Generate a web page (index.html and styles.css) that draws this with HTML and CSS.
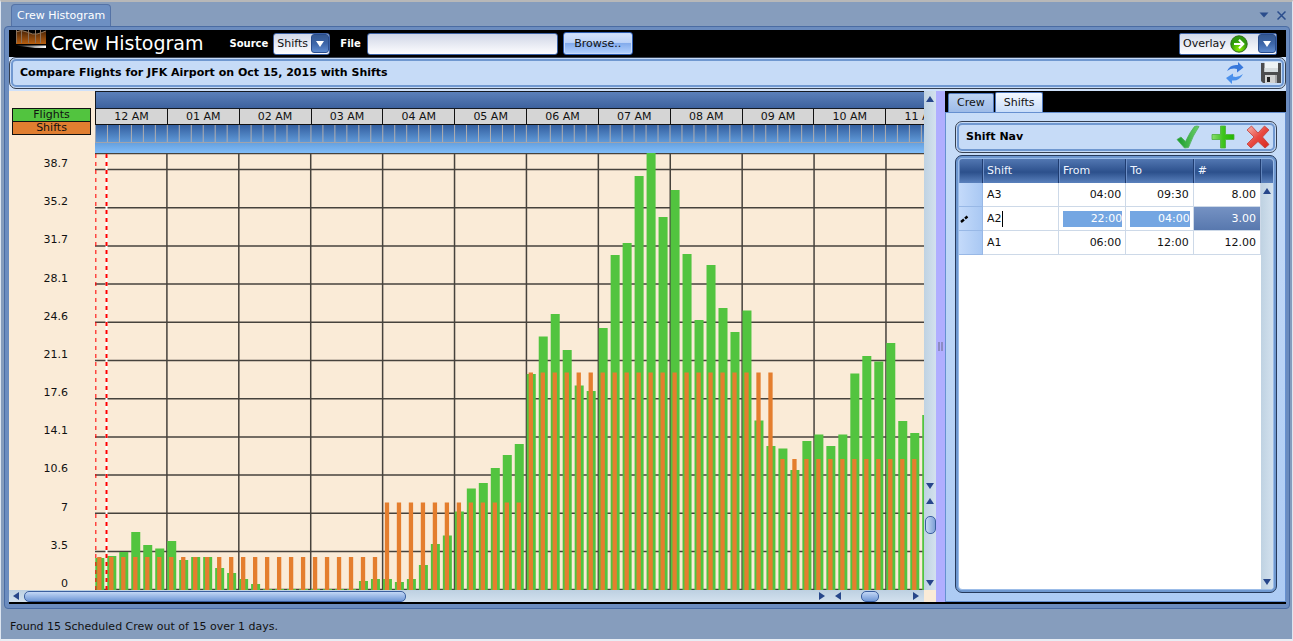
FILE: index.html
```html
<!DOCTYPE html>
<html lang="en">
<head>
<meta charset="utf-8">
<title>Crew Histogram</title>
<link rel="stylesheet" href="styles.css">
</head>
<body>
<div class="window">
  <div class="tabstrip">
    <button class="doc-tab" type="button">Crew Histogram</button>
    <div class="win-actions">
      <button class="plain" type="button" aria-label="Window menu"><svg width="10" height="6" viewBox="0 0 10 6"><path d="M0.500 0.500h9l-4.500 5z" fill="#2b4d8c"/></svg></button>
      <button class="plain" type="button" aria-label="Close"><svg width="9" height="9" viewBox="0 0 9 9"><path d="M0.500 0.500l8 8M8.500 0.500l-8 8" stroke="#2b4d8c" stroke-width="1.500"/></svg></button>
    </div>
  </div>

  <div class="frame">
    <header class="header">
      <svg class="logo" width="32" height="20" viewBox="0 0 32 20">
        <defs>
          <linearGradient id="lg" x1="0" y1="0" x2="0" y2="1"><stop offset="0" stop-color="#4a2406"/><stop offset="1" stop-color="#b85f10"/></linearGradient>
          <linearGradient id="lw" x1="0" y1="0" x2="1" y2="0"><stop offset="0" stop-color="#222"/><stop offset="1" stop-color="#fff"/></linearGradient>
        </defs>
        <path d="M1 2Q6-1 12 2T22 4T31 1V14H1z" fill="url(#lg)"/>
        <path d="M1.500 0V13M6.500 0V13M13.500 0V13M20.500 0V13M25.500 0V13" stroke="#8a705a" stroke-width="1"/>
        <path d="M1 2Q6-1 12 2T22 4T31 1" fill="none" stroke="#94785c"/>
        <path d="M1 15.500H31V18H20z" fill="url(#lw)"/>
      </svg>
      <h1 class="title">Crew Histogram</h1>
      <label class="hlabel source-label" for="source">Source</label>
      <span class="combo combo-source">
        <select id="source"><option>Shifts</option></select>
        <span class="drop"><svg width="8" height="6" viewBox="0 0 8 6"><path d="M0 0h8l-4 6z" fill="#fff"/></svg></span>
      </span>
      <label class="hlabel file-label" for="file">File</label>
      <input class="file" id="file" type="text">
      <button class="browse" type="button">Browse..</button>
      <span class="combo combo-overlay">
        <select aria-label="Overlay"><option>Overlay</option></select>
        <svg class="go" width="18" height="18" viewBox="0 0 18 18"><defs><radialGradient id="gg" cy=".8"><stop offset="0" stop-color="#8ff000"/><stop offset="1" stop-color="#2f9a0c"/></radialGradient></defs><circle cx="9" cy="9" r="8.200" fill="url(#gg)" stroke="#2f6b1a"/><path d="M4 9h9M9 4.800l4.200 4.200L9 13.200" fill="none" stroke="#fff" stroke-width="2.200"/></svg>
        <span class="drop"><svg width="8" height="6" viewBox="0 0 8 6"><path d="M0 0h8l-4 6z" fill="#fff"/></svg></span>
      </span>
    </header>

    <div class="navwrap">
      <div class="bar"><div class="bar-in">
        <h2 class="bar-title">Compare Flights for JFK Airport on Oct 15, 2015 with Shifts</h2>
        <div class="main-tools">
          <button class="plain" type="button" aria-label="Refresh"><svg width="20" height="22" viewBox="0 0 20 22"><path d="M2 9Q5 2 13 3V0L18.500 5.500L12 10.500V7Q7 5.500 2 9z" fill="#3878dc"/><path d="M18 12Q14 19.500 7 18.500V22L1 16L8 11.500V14.500Q13 16 18 12z" fill="#4a90ec"/></svg></button>
          <button class="plain" type="button" aria-label="Save"><svg width="22" height="22" viewBox="0 0 22 22"><path d="M1 1H21V21H3L1 19z" fill="#4c4c4e"/><path d="M4.500 0H18V10H4.500z" fill="#eef3f5"/><path d="M4.500 6H18V10H4.500z" fill="#d7dde0"/><path d="M5 13H17V21H5z" fill="#a9a9ab"/><path d="M5 13H15V21H5z" fill="#d2d2d2"/><path d="M7 15H10V20H7z" fill="#222"/></svg></button>
        </div>
      </div></div>
    </div>

    <main class="body">
      <section class="chart-pane">
        <div class="gutter">
          <div class="legend"><span class="lg-flights">Flights</span><span class="lg-shifts">Shifts</span></div>
          <div class="ylabels"><span>38.7</span><span>35.2</span><span>31.7</span><span>28.1</span><span>24.6</span><span>21.1</span><span>17.6</span><span>14.1</span><span>10.6</span><span>7</span><span>3.5</span><span>0</span></div>
        </div>
        <div class="timeline">
          <div class="band"></div>
          <div class="hours"><span>12 AM</span><span>01 AM</span><span>02 AM</span><span>03 AM</span><span>04 AM</span><span>05 AM</span><span>06 AM</span><span>07 AM</span><span>08 AM</span><span>09 AM</span><span>10 AM</span><span>11 AM</span></div>
          <div class="ticks"></div>
          <div class="glow"></div>
          <div class="plot"><svg id="plot" viewBox="0 0 828 437" preserveAspectRatio="none" role="img" aria-label="Flights and shifts by time of day"></svg></div>
        </div>
        <div class="vscrolls">
          <div class="vs vs-top"><i class="up"></i><i class="down"></i></div>
          <div class="vs vs-bottom"><i class="up"></i><b class="vthumb"></b><i class="down"></i></div>
        </div>
        <div class="hscrolls">
          <div class="hs hs-main"><i class="left"></i><b class="hthumb"></b><i class="right"></i></div>
          <div class="hs hs-zoom"><i class="left"></i><b class="hthumb-small"></b><i class="right"></i></div>
        </div>
      </section>
      <div class="splitter"><span></span></div>
      <aside class="side">
        <div class="side-tabs"><button class="stab" type="button">Crew</button><button class="stab stab-on" type="button">Shifts</button></div>
        <div class="side-body">
          <div class="bar"><div class="bar-in">
            <h3 class="bar-title">Shift Nav</h3>
            <div class="side-tools">
              <button class="plain" type="button" aria-label="Accept"><svg width="24" height="24" viewBox="0 0 24 24"><defs><linearGradient id="ck"><stop offset="0" stop-color="#189a2c"/><stop offset="1" stop-color="#6cd068"/></linearGradient></defs><path d="M1 14.500L5 12L9.500 16.500Q14 7 18.500 1.500Q21 0.500 23 1.500Q17 10 12.500 22.500L8.500 23z" fill="url(#ck)" stroke="#4fae58" stroke-width=".8"/></svg></button>
              <button class="plain" type="button" aria-label="Add"><svg width="24" height="24" viewBox="0 0 24 24"><defs><linearGradient id="pl"><stop offset="0" stop-color="#8ade70"/><stop offset=".5" stop-color="#3fc41e"/><stop offset="1" stop-color="#22b800"/></linearGradient></defs><path d="M9.500 1H14.500V9.500H23V14.500H14.500V23H9.500V14.500H1V9.500H9.500z" fill="url(#pl)" stroke="#4eae3c" stroke-width=".8"/></svg></button>
              <button class="plain" type="button" aria-label="Delete"><svg width="24" height="24" viewBox="0 0 24 24"><defs><linearGradient id="dx" x2="1" y2="1"><stop offset="0" stop-color="#f8b8b0"/><stop offset=".5" stop-color="#e84840"/><stop offset="1" stop-color="#d82820"/></linearGradient></defs><path d="M5.500 1L12 8L18.500 1L23 5L16.500 12L23 19.500L19 23L12 16.500L5 23L1 19L8 12L1 5z" fill="url(#dx)" stroke="#c03c38" stroke-width=".8"/></svg></button>
            </div>
          </div></div>
          <div class="gridbox"><div class="gridbox-in">
            <div class="ghead-fill"></div>
            <table class="grid">
              <thead><tr><th class="c-sel"></th><th class="c-shift">Shift</th><th>From</th><th>To</th><th>#</th></tr></thead>
              <tbody>
                <tr><td class="sel"></td><td>A3</td><td class="num">04:00</td><td class="num">09:30</td><td class="num">8.00</td></tr>
                <tr><td class="sel"><svg width="9" height="8" viewBox="0 0 9 8"><path d="M1 7L4 4.500M5 3.500L7.500 1.500" stroke="#000" stroke-width="2.400"/></svg></td><td><input class="edit" aria-label="Shift" value="A2"></td><td class="cell-time"><input class="time" aria-label="From" value="22:00"></td><td class="cell-time"><input class="time" aria-label="To" value="04:00"></td><td class="num hot">3.00</td></tr>
                <tr><td class="sel"></td><td>A1</td><td class="num">06:00</td><td class="num">12:00</td><td class="num">12.00</td></tr>
              </tbody>
            </table>
            <div class="vs grid-scroll"><i class="up"></i><i class="down"></i></div>
          </div></div>
        </div>
      </aside>
    </main>
  </div>
  <footer class="status">Found 15 Scheduled Crew out of 15 over 1 days.</footer>
</div>
<script src="chart.js"></script>
</body>
</html>
```
FILE: styles.css
```css
* { box-sizing: border-box; }
body { margin: 0; font: 11px/14px "DejaVu Sans", Verdana, sans-serif; color: #111; background: #fff; }
button, input, select { font: inherit; color: inherit; margin: 0; }
h1, h2, h3 { margin: 0; font-weight: normal; }
svg { display: block; }
.plain { border: 0; background: none; padding: 0; display: block; }

.window { height: 100vh; min-height: 400px; display: flex; flex-direction: column; background: #869dbd; border: 1px solid #dde5f0; border-top: 2px solid #b8b8b8; border-bottom: 2px solid #e8edf4; padding: 2px 2px 0 3px; }
.tabstrip { display: flex; justify-content: space-between; height: 22px; padding: 0 4px 0 7px; }
.doc-tab { height: 22px; padding: 0 5px; color: #fff; background: #6d8fc2; border: 1px solid #5573a6; border-bottom: 0; border-radius: 4px 4px 0 0; }
.win-actions { display: flex; align-items: center; gap: 8px; }

.frame { flex: 1; min-height: 0; display: flex; flex-direction: column; background: #6b8cbf; border: 1px solid #4a6ca3; border-radius: 4px; padding: 3px 3px 4px 4px; }

.header { height: 27px; flex: none; background: #000; display: flex; align-items: center; padding: 0 9px 0 6px; }
.logo { align-self: flex-start; }
.title { color: #fff; font-size: 19px; line-height: 27px; margin-left: 4px; white-space: nowrap; }
.hlabel { color: #fff; font-weight: bold; font-size: 10px; }
.source-label { margin-left: 26px; margin-right: 5px; }
.file-label { margin: 0 6px 0 10px; }
.combo { display: grid; grid-template-columns: 1fr auto 18px; align-items: center; height: 22px; border: 1px solid #3c61a3; border-radius: 2px; background: linear-gradient(#d3daea, #fdfdff); }
.combo select { grid-area: 1 / 1 / 2 / 4; appearance: none; border: 0; background: none; height: 20px; padding: 0 3px; width: 100%; }
.drop { grid-area: 1 / 3 / 2 / 4; pointer-events: none; height: 19px; display: grid; place-items: center; border: 1px solid #2a4d8d; border-radius: 3px; background: linear-gradient(#35588f, #3c65a8 50%, #5f8bcf); }
.combo-source { width: 57px; border-radius: 3px; }
.combo-overlay { width: 98px; margin-left: auto; }
.go { grid-area: 1 / 2 / 2 / 3; margin-right: 10px; pointer-events: none; }
.file { width: 191px; height: 22px; border: 1px solid #3c61a3; border-radius: 3px; background: linear-gradient(#d0d6e6, #fdfdff); padding: 0 4px; }
.browse { width: 70px; height: 23px; margin-left: 5px; padding: 0; border: 1px solid #2d5cb0; border-radius: 3px; background: linear-gradient(#d4e2fb, #bdd3f8 45%, #84acec 50%, #b5d3ff); box-shadow: inset 0 0 0 1px #c8dcfb; }

.navwrap { background: #cfe1fa; padding-bottom: 2px; }
.bar { border: 1px solid #353f50; border-radius: 7px; padding: 1px; background: #c6dbf7; }
.bar-in { height: 28px; display: flex; align-items: center; justify-content: space-between; border: 2px solid #7098d0; border-radius: 5px; padding: 0 4px 0 7px; }
.bar-title { font-weight: bold; font-size: 11px; color: #000; white-space: nowrap; }
.main-tools { display: flex; gap: 15px; margin-right: -4px; }
.side-tools { display: flex; gap: 11px; margin-right: -1px; }

.body { flex: 1; min-height: 0; display: flex; background: #000; padding-bottom: 2px; }
.chart-pane { flex: 1; min-width: 0; display: grid; grid-template: minmax(0, 1fr) 12px / 86px minmax(0, 1fr) 12px; background: #faebd7; }
.gutter { padding: 17px 4px 0 3px; display: flex; flex-direction: column; }
.legend { display: flex; flex-direction: column; border: 1px solid #111; text-align: center; line-height: 12px; }
.lg-flights { background: #52c43f; border-bottom: 1px solid #111; }
.lg-shifts { background: #e07e30; }
.ylabels { flex: 1; margin-top: 23px; padding-right: 23px; display: flex; flex-direction: column; justify-content: space-between; text-align: right; line-height: 12px; }

.timeline { display: flex; flex-direction: column; min-width: 0; overflow: hidden; }
.band { height: 18px; flex: none; background: linear-gradient(#5b80ba, #3d629e); border: 1px solid #151a22; border-right: 0; }
.hours { display: flex; height: 16px; flex: none; border-bottom: 1px solid #111; overflow: hidden; border-left: 1px solid #111; }
.hours span { flex: 0 0 calc(100% / 11.525); border-right: 1px solid #111; background: #d5d5d5; text-align: center; line-height: 16px; white-space: nowrap; }
.ticks { height: 18px; flex: none; border-left: 1px solid #9aa3b2; border-bottom: 1px solid #a0a3ac; background: linear-gradient(90deg, transparent calc(100% - 1px), #b0aeb0 0) 0 0 / calc(100% / 69.150) 100%, linear-gradient(#345f9f, #5f99d8); }
.glow { height: 10px; flex: none; background: linear-gradient(#66a0de, #80bdfa); }
.plot { flex: 1; min-height: 0; }
.plot svg { width: 100%; height: 100%; }
.flight { fill: #52c43f; }
.shift { fill: #e47e2e; }
.line { stroke: #000; stroke-opacity: .72; stroke-width: 1.5px; fill: none; }
.mark-bg { stroke: #fff; stroke-width: 2px; }
.mark { stroke: #f00; stroke-width: 2px; stroke-dasharray: 4 4; }
.mark-soft { stroke-opacity: .7; }

.vscrolls { display: flex; flex-direction: column; min-height: 0; }
.vs { display: flex; flex-direction: column; align-items: center; justify-content: space-between; background: linear-gradient(90deg, #bfd2e2, #d3e1ee); padding: 5px 0 4px; }
.vs-top { flex: 4; }
.vs-bottom { flex: 0 0 97px; }
.vs-bottom .down { margin-top: 34px; }
.up, .down { width: 0; height: 0; border: 4px solid transparent; }
.up { border-bottom: 6px solid #27468a; border-top: 0; }
.down { border-top: 6px solid #27468a; border-bottom: 0; }
.left, .right { flex: none; width: 0; height: 0; border: 4px solid transparent; }
.left { border-right: 6px solid #27468a; border-left: 0; }
.right { border-left: 6px solid #27468a; border-right: 0; }
.vthumb { width: 11px; height: 18px; border: 1px solid #3b5f9f; border-radius: 5px; background: linear-gradient(90deg, #c6d9f4, #7ea0d6); }
.hscrolls { grid-column: 1 / 3; display: flex; min-width: 0; }
.hs { display: flex; align-items: center; justify-content: space-between; background: linear-gradient(#bdd0e1, #d3e1ee); padding: 0 5px 0 4px; }
.hs-main { flex: 1; gap: 5px; padding-right: 2px; }
.hs-main .right { margin-left: auto; }
.hs-zoom { flex: 0 0 97px; padding-left: 8px; }
.hthumb { width: 47%; height: 11px; border: 1px solid #3b5f9f; border-radius: 5px; background: linear-gradient(#c3d7f5, #6f97d6); }
.hthumb-small { width: 18px; height: 11px; margin-right: 14px; border: 1px solid #3b5f9f; border-radius: 5px; background: linear-gradient(#c3d7f5, #6f97d6); }

.splitter { width: 9px; background: #b0aeff; display: grid; place-items: center; }
.splitter span { width: 5px; height: 9px; border: solid #8c8cc4; border-width: 0 2px; }

.side { width: 341px; display: flex; flex-direction: column; min-height: 0; }
.side-tabs { height: 21px; flex: none; display: flex; align-items: flex-end; gap: 1px; padding-left: 3px; }
.stab { height: 19px; padding: 0 8px; border: 1px solid #4f78be; border-bottom: 0; border-radius: 2px 2px 0 0; background: linear-gradient(#bdd3f2, #9dbbe8); }
.stab-on { height: 20px; background: linear-gradient(#f3f8ff, #c9def9); }
.side-body { flex: 1; min-height: 0; display: flex; flex-direction: column; gap: 2px; padding: 8px 8px 8px 9px; border: 1px solid #6690d0; background: linear-gradient(#c8ddf8, #adcbf4); }
.gridbox { flex: 1; min-height: 0; border: 1px solid #263a5c; border-radius: 7px; background: #6f98d0; padding: 2px; display: flex; }
.gridbox-in { flex: 1; min-height: 0; background: #fff; border: 1px solid #9bbce8; border-radius: 4px; display: grid; grid-template: 24px minmax(0, 1fr) / minmax(0, 1fr) 12px; overflow: hidden; }
.ghead-fill { grid-area: 1 / 2; border-left: 1px solid #6286bd; background: linear-gradient(#5277b2, #2c508c 55%, #5a81bd); }
.grid { grid-area: 1 / 1 / 3 / 2; align-self: start; width: 100%; border-collapse: separate; border-spacing: 0; table-layout: fixed; }
.grid th { height: 24px; padding: 0 3px; color: #f0f5ff; font-weight: normal; text-align: left; background: linear-gradient(#5277b2, #2c508c 55%, #5a81bd); border-right: 1px solid #1f3c70; border-left: 1px solid #6c8fc8; }
.grid .c-sel { width: 24px; }
.grid .c-shift { width: 76px; }
.grid td { height: 24px; padding: 0 4px; border-right: 1px solid #cdd9e8; border-bottom: 1px solid #cdd9e8; }
.grid .sel { padding: 0 1px; background: linear-gradient(90deg, #c4dafa, #a9c8f3); border-color: #98b8e6; }
.grid .num { text-align: right; }
.grid .cell-time { padding: 0 3px 0 4px; }
.grid .hot { color: #fff; background: linear-gradient(#7592c3, #5878ae); }
.edit { width: 16px; height: 16px; border: 0; border-right: 1px solid #000; padding: 0; background: none; }
.time { display: block; width: 100%; height: 16px; border: 0; padding: 0; color: #fff; background: #74a6e2; text-align: right; }
.grid-scroll { grid-area: 2 / 2; }

.status { flex: none; height: 30px; padding: 11px 6px 0; }
```
FILE: chart.js
```js
const SLOT = 11.97;
const BASE = 437;
const flights = [
  32, 34, 38, 58, 45, 41.5, 49, 30, 33, 33, 22, 17, 11, 6, 1, 1, 1, 1, 1, 1, 1, 1, 9, 11,
  11, 8, 11, 25, 46, 54.5, 78.5, 101.5, 107, 122, 135, 146, 216, 253.5, 276, 240, 204.5, 199,
  262, 335, 347, 414, 437, 373, 400, 336, 270, 325, 282, 258, 279.5, 169.5, 144, 141.5, 120, 149,
  155.5, 144, 155.5, 216.5, 234, 228.5, 247, 169, 157, 175
];
const shiftRuns = [[24, 33], [36, 87.5], [57, 217.5], [70, 131]];

const svg = document.getElementById('plot');
function add(tag, cls, attrs) {
  const el = document.createElementNS('http://www.w3.org/2000/svg', tag);
  el.setAttribute('class', cls);
  for (const key in attrs) el.setAttribute(key, attrs[key]);
  svg.appendChild(el);
}

let lines = 'M0 0.5H828M0 436.5H828';
for (let k = 0; k < 11; k++) lines += `M0 ${16.5 + k * 38.2}H828`;
for (let h = 1; h < 12; h++) lines += `M${h * 6 * SLOT} 0V437`;
add('path', 'line', { d: lines });

flights.forEach((h, i) => {
  add('rect', 'flight', { x: i * SLOT + 0.3, y: BASE - h, width: 9, height: h });
});
flights.forEach((_, i) => {
  const h = shiftRuns.find(run => i < run[0])[1];
  add('rect', 'shift', { x: i * SLOT + 2.2, y: BASE - h, width: 4.3, height: h });
});
add('path', 'mark-bg', { d: 'M11.5 1V400' });
add('path', 'mark mark-soft', { d: 'M0.5 1V437' });
add('path', 'mark', { d: 'M11.5 1V437' });
```
